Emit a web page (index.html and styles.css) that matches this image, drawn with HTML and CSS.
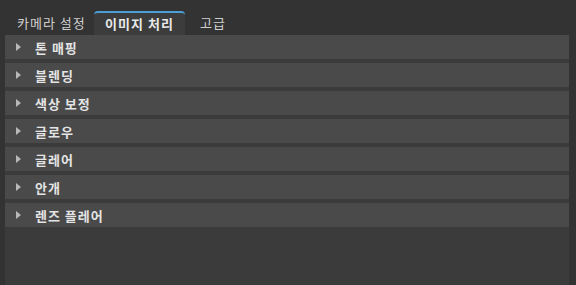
FILE: index.html
```html
<!DOCTYPE html>
<html>
<head>
    <meta charset="utf-8">
    <title>설정</title>
    <link rel="stylesheet" href="styles.css">
</head>
<body>
    <div class="tabs">
        <div class="tab">카메라 설정</div>
        <div class="tab active">이미지 처리</div>
        <div class="tab">고급</div>
    </div>
    <div class="panel">
        <div class="section"><span class="arrow"></span>톤 매핑</div>
        <div class="section"><span class="arrow"></span>블렌딩</div>
        <div class="section"><span class="arrow"></span>색상 보정</div>
        <div class="section"><span class="arrow"></span>글로우</div>
        <div class="section"><span class="arrow"></span>글레어</div>
        <div class="section"><span class="arrow"></span>안개</div>
        <div class="section"><span class="arrow"></span>렌즈 플레어</div>
    </div>
</body>
</html>
```

FILE: styles.css
```css
body {
    margin: 0;
    width: 576px;
    height: 285px;
    overflow: hidden;
    background: #333333;
    font-family: "Noto Sans CJK KR", "Noto Sans", sans-serif;
    font-size: 13px;
    letter-spacing: 1px;
    color: #d8d8d8;
}

.tabs {
    display: flex;
    height: 35px;
    padding-left: 5px;
    align-items: flex-end;
    box-sizing: border-box;
}

.tab {
    height: 24px;
    line-height: 23px;
    padding: 0 12px;
    color: #cfcfcf;
    box-sizing: border-box;
    white-space: nowrap;
}

.tab:first-child {
    padding-left: 12px;
    padding-right: 0;
    width: 89px;
}

.tab.active {
    width: 91px;
    text-align: center;
    padding: 0;
    margin-right: 3px;
    background: #3c3c3c;
    border-top: 2px solid #4b9fd8;
    border-radius: 4px 4px 0 0;
    line-height: 21px;
    font-weight: bold;
    color: #e8e8e8;
}

.panel {
    margin: 0 7px 0 5px;
    height: 250px;
    background: #3b3b3b;
    display: flex;
    flex-direction: column;
    gap: 4px;
}

.section {
    height: 24px;
    background: #4a4a4a;
    display: flex;
    align-items: center;
    font-weight: bold;
    color: #e4e4e4;
}

.arrow {
    width: 0;
    height: 0;
    margin: 0 14px 0 11px;
    border-top: 4px solid transparent;
    border-bottom: 4px solid transparent;
    border-left: 5px solid #b8b8b8;
}
```
